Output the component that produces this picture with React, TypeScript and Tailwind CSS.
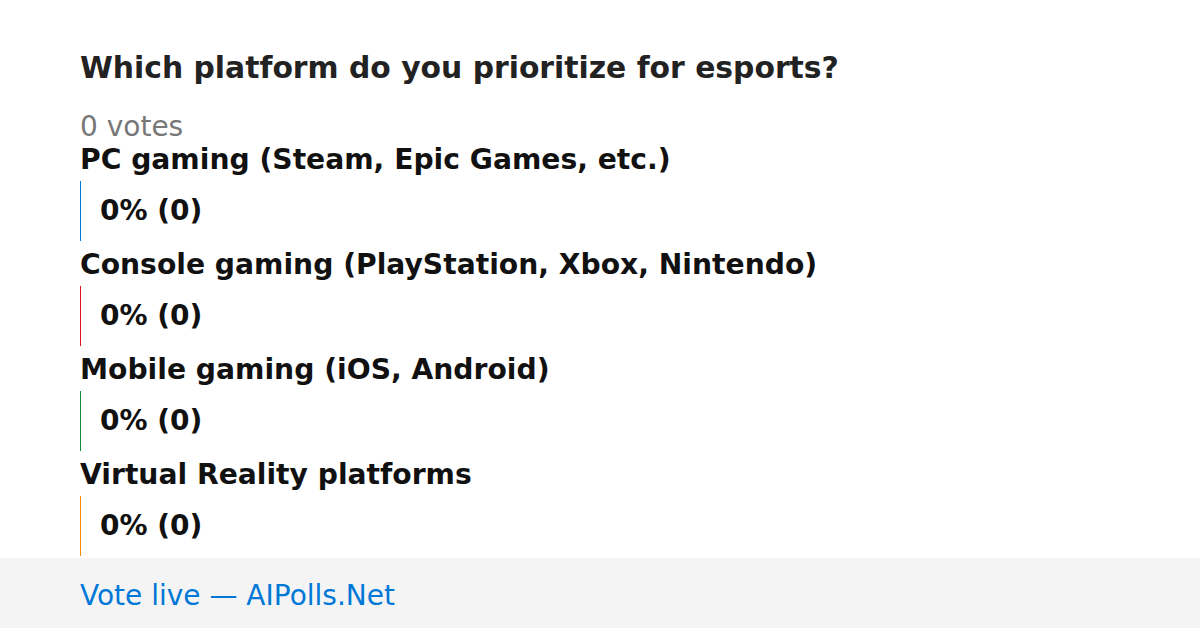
import React from 'react';

type Option = {
    label: string;
    color: string;
};

const options: Option[] = [
    { label: 'PC gaming (Steam, Epic Games, etc.)', color: 'border-[#0078d7]' },
    { label: 'Console gaming (PlayStation, Xbox, Nintendo)', color: 'border-[#e81123]' },
    { label: 'Mobile gaming (iOS, Android)', color: 'border-[#10893e]' },
    { label: 'Virtual Reality platforms', color: 'border-[#ff8c00]' },
];

const App: React.FC = () => {
    return (
        <div className="w-[1200px] h-[628px] bg-white flex flex-col font-['DejaVu_Sans',sans-serif] overflow-hidden">
            <div className="h-[558px] px-20 pt-[50px]">
                <h1 className="text-[29.8px] leading-[36px] font-bold text-[#222]">
                    Which platform do you prioritize for esports?
                </h1>
                <div className="mt-[26px] text-[28px] leading-[30px] text-[#777]">0 votes</div>
                <div className="mt-[3px] flex flex-col gap-[9px]">
                    {options.map((opt) => (
                        <div key={opt.label}>
                            <div className="text-[28.2px] leading-[30px] font-bold text-[#111]">{opt.label}</div>
                            <div className={`mt-[6px] h-[60px] border-l ${opt.color} pl-[19px] flex items-center`}>
                                <span className="text-[28px] font-bold text-[#111]">0% (0)</span>
                            </div>
                        </div>
                    ))}
                </div>
            </div>
            <div className="h-[70px] bg-[#f4f4f4] px-20 pt-[6px] flex items-center">
                <span className="text-[28px] text-[#0078d7]">Vote live — AIPolls.Net</span>
            </div>
        </div>
    );
};

export default App;
